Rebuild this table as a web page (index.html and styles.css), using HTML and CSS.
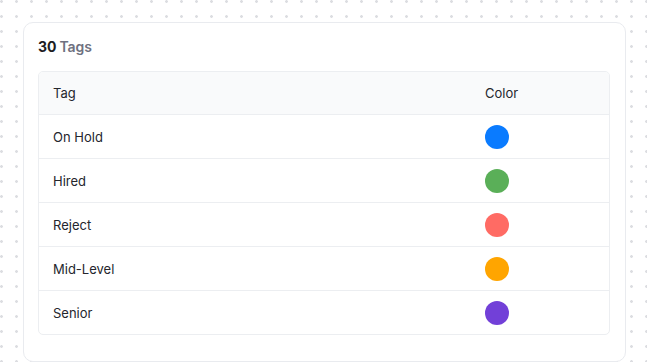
FILE: index.html
```html
<!DOCTYPE html>
<html>
<head>
<meta charset="utf-8">
<link rel="stylesheet" href="styles.css">
</head>
<body>
<div class="card">
  <h2 class="title"><span class="count">30</span> <span class="label">Tags</span></h2>
  <div class="table">
    <div class="row head"><div class="c-tag">Tag</div><div class="c-color">Color</div></div>
    <div class="row"><div class="c-tag">On Hold</div><div class="c-color"><span class="dot blue"></span></div></div>
    <div class="row"><div class="c-tag">Hired</div><div class="c-color"><span class="dot green"></span></div></div>
    <div class="row"><div class="c-tag">Reject</div><div class="c-color"><span class="dot red"></span></div></div>
    <div class="row"><div class="c-tag">Mid-Level</div><div class="c-color"><span class="dot orange"></span></div></div>
    <div class="row"><div class="c-tag">Senior</div><div class="c-color"><span class="dot purple"></span></div></div>
  </div>
</div>
</body>
</html>
```
FILE: styles.css
```css
html, body { margin: 0; padding: 0; }
body {
  width: 647px;
  height: 362px;
  overflow: hidden;
  background-color: #ffffff;
  background-image: radial-gradient(circle at 1.5px 1.5px, #dcdde1 1.1px, transparent 1.6px);
  background-size: 15px 15px;
  background-position: 0 0;
  font-family: Inter, "Open Sans", sans-serif;
  color: #1f2128;
  padding: 22px 0 0 23px;
  box-sizing: border-box;
}
.card {
  width: 603px;
  height: 340px;
  box-sizing: border-box;
  background: #fff;
  border: 1px solid #e9ebef;
  border-radius: 10px;
  padding: 14px 15px 0 14px;
}
.title {
  margin: 0 0 14px 0;
  font-size: 14px;
  line-height: 20px;
  font-weight: 700;
  letter-spacing: -0.1px;
}
.count { color: #1c1d22; }
.label { color: #6e7180; font-weight: 600; }
.table {
  border: 1px solid #eceef1;
  border-radius: 5px;
  overflow: hidden;
}
.row {
  display: flex;
  align-items: center;
  height: 44px;
  box-sizing: border-box;
  border-top: 1px solid #eceef1;
  font-size: 13px;
  color: #24262d;
}
.row.head {
  border-top: none;
  height: 42px;
  background: #f9fafb;
}
.c-tag { flex: 1; padding-left: 14px; }
.c-color { width: 124px; display: flex; align-items: center; }
.dot {
  width: 24px;
  height: 24px;
  border-radius: 50%;
  display: block;
}
.blue { background: #0a7bff; }
.green { background: #5aaf58; }
.red { background: #ff6b64; }
.orange { background: #ffa500; }
.purple { background: #7240d8; }
```
